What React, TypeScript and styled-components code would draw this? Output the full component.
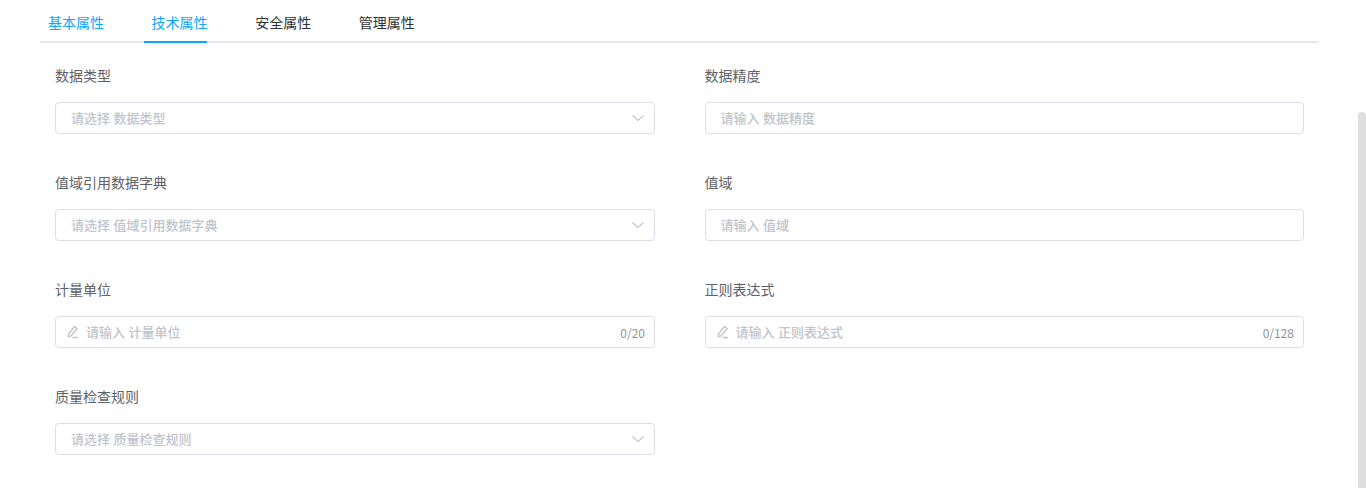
import styled, { createGlobalStyle } from 'styled-components';

const GlobalStyle = createGlobalStyle`
	html, body {
		margin: 0;
		height: 100%;
		overflow: hidden;
		background: #fff;
		font-family: 'Noto Sans CJK SC', 'Noto Sans', sans-serif;
	}
`;

const Page = styled.div`
	height: 488px;
	padding: 0 47px 0 40px;
	box-sizing: border-box;
`;

const Tabs = styled.div`
	display: flex;
	height: 41px;
	gap: 40px;
	border-bottom: 2px solid #e4e7ed;
`;

const Tab = styled.div<{ selected?: boolean; highlighted?: boolean }>`
	width: 63.6px;
	height: 43px;
	padding-left: 8px;
	box-sizing: border-box;
	font-size: 14px;
	line-height: 44px;
	white-space: nowrap;
	color: ${(p) => (p.highlighted ? '#0da5ff' : '#303133')};
	border-bottom: 2px solid ${(p) => (p.selected ? '#0da5ff' : 'transparent')};
`;

const Form = styled.div`
	display: grid;
	grid-template-columns: 600px 599.4px;
	column-gap: 49.6px;
	row-gap: 27px;
	padding: 22px 15px 0;
`;

const Field = styled.div`
	display: flex;
	flex-direction: column;
	height: 80px;
`;

const Label = styled.div`
	height: 37px;
	font-size: 14px;
	line-height: 20px;
	color: #606266;
`;

const Control = styled.div`
	display: flex;
	align-items: center;
	height: 32px;
	padding: 0 9px 0 15px;
	box-sizing: border-box;
	border: 1px solid #dcdfe6;
	border-radius: 4px;
	background: #fff;
	&.with-icon {
		padding-left: 11px;
	}
`;

const Placeholder = styled.span`
	flex: 1;
	padding-bottom: 2px;
	font-size: 13px;
	font-weight: 500;
	word-spacing: 0.5px;
	color: #c0c4cc;
`;

const Count = styled.span`
	font-size: 12px;
	color: #909399;
`;

const ScrollThumb = styled.div`
	position: absolute;
	top: 112px;
	right: 0;
	bottom: 0;
	width: 8px;
	background: #dedede;
	border-radius: 4px 4px 0 0;
`;

const Chevron = () => (
	<svg width='14' height='14' viewBox='0 0 14 14' fill='none' stroke='#c0c4cc' strokeWidth='1.1'>
		<path d='M1.5 4.5 7 9.5l5.5-5' />
	</svg>
);

const PencilIcon = styled.svg`
	flex: none;
	margin-right: 5px;
`;

const Pencil = () => (
	<PencilIcon width='14' height='14' viewBox='0 0 14 14' fill='none' stroke='#c0c4cc' strokeWidth='1.4'>
		<path d='M1.5 9 7.5 1.5l2.6 2L4 11l-2.6.8zM5.5 12.5h5.5' />
	</PencilIcon>
);

type FieldDef = {
	label: string;
	placeholder: string;
	kind: 'select' | 'input' | 'counted';
	limit?: number;
};

const fields: FieldDef[] = [
	{ label: '数据类型', placeholder: '请选择 数据类型', kind: 'select' },
	{ label: '数据精度', placeholder: '请输入 数据精度', kind: 'input' },
	{ label: '值域引用数据字典', placeholder: '请选择 值域引用数据字典', kind: 'select' },
	{ label: '值域', placeholder: '请输入 值域', kind: 'input' },
	{ label: '计量单位', placeholder: '请输入 计量单位', kind: 'counted', limit: 20 },
	{ label: '正则表达式', placeholder: '请输入 正则表达式', kind: 'counted', limit: 128 },
	{ label: '质量检查规则', placeholder: '请选择 质量检查规则', kind: 'select' },
];

const App = () => {
	return (
		<Page>
			<GlobalStyle />
			<Tabs>
				<Tab highlighted>基本属性</Tab>
				<Tab highlighted selected>
					技术属性
				</Tab>
				<Tab>安全属性</Tab>
				<Tab>管理属性</Tab>
			</Tabs>
			<Form>
				{fields.map((field) => (
					<Field key={field.label}>
						<Label>{field.label}</Label>
						<Control className={field.kind === 'counted' ? 'with-icon' : ''}>
							{field.kind === 'counted' && <Pencil />}
							<Placeholder>{field.placeholder}</Placeholder>
							{field.kind === 'select' && <Chevron />}
							{field.kind === 'counted' && <Count>0/{field.limit}</Count>}
						</Control>
					</Field>
				))}
			</Form>
			<ScrollThumb />
		</Page>
	);
};

export default App;
